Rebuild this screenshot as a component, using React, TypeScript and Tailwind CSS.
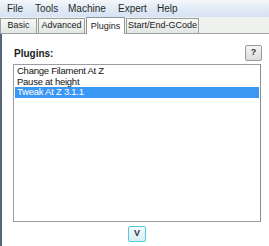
import React from "react";

const menus = [
    { label: "File", w: "w-[28px]" },
    { label: "Tools", w: "w-[33px]" },
    { label: "Machine", w: "w-[50px]" },
    { label: "Expert", w: "w-[39px]" },
    { label: "Help", w: "w-[30px]" },
];

const plugins = ["Change Filament At Z", "Pause at height", "Tweak At Z 3.1.1"];

function Tab({ label, w, active }: { label: string; w: string; active?: boolean }) {
    if (active) {
        return (
            <div className={`${w} h-[17px] -mb-px bg-white border border-b-0 border-[#8e9894] flex items-start pt-[2px] justify-center text-[#1a1a1a] whitespace-nowrap relative z-10`}>
                {label}
            </div>
        );
    }
    return (
        <div className={`${w} h-[15px] bg-gradient-to-b from-[#f7f8f7] to-[#e2e6e2] border border-b-0 border-[#9aa29e] flex items-center justify-center text-[#1a1a1a] whitespace-nowrap`}>
            {label}
        </div>
    );
}

export default function App() {
    return (
        <div
            className="w-[269px] h-[246px] bg-white overflow-hidden flex flex-col"
            style={{ fontFamily: '"Liberation Sans", Arial, sans-serif' }}
        >
            <div className="h-[17px] bg-gradient-to-b from-[#f5f7f9] via-[#e2eaf6] to-[#d6e2f5] flex items-center pl-[7px] text-[10px] text-[#1f2d1f]">
                {menus.map((m) => (
                    <span key={m.label} className={`${m.w} whitespace-nowrap`}>{m.label}</span>
                ))}
            </div>
            <div className="h-[17px] bg-[#eff1ee] border-b border-[#9aa29e] flex items-end gap-px text-[9px]">
                <Tab label="Basic" w="w-[37px]" />
                <Tab label="Advanced" w="w-[47px]" />
                <Tab label="Plugins" w="w-[39px]" active />
                <Tab label="Start/End-GCode" w="w-[73px]" />
            </div>
            <div className="flex-1 flex">
                <div className="w-[2px] bg-[#56647c]" />
                <div className="flex-1 flex flex-col pl-[11px] pr-[8px] pt-[11px]">
                    <div className="flex items-center justify-between h-[16px]">
                        <span className="text-[10px] font-bold text-[#1a1a1a] pl-px">Plugins:</span>
                        <div className="w-[17px] h-[16px] mr-[-1px] border border-[#9a9a9a] rounded-[2px] bg-gradient-to-b from-[#f6f6f6] to-[#dcdcdc] flex items-center justify-center text-[9px] font-bold text-[#333]">
                            ?
                        </div>
                    </div>
                    <div className="mt-[3px] h-[158px] border border-[#9c9ca4] border-r-[#8a8a98] bg-white pt-px px-px">
                        {plugins.map((p, i) => (
                            <div
                                key={p}
                                className={`h-[10.5px] leading-[10.5px] pl-[2px] text-[9.5px] tracking-[-0.25px] whitespace-nowrap ${i === 2 ? "bg-[#3a98f4] text-white" : "text-[#111]"}`}
                            >
                                {p}
                            </div>
                        ))}
                    </div>
                    <div className="flex justify-center mt-[4px]">
                        <div className="w-[18px] h-[16px] border border-[#52cbe0] rounded-[2px] bg-gradient-to-b from-[#f4fbfd] to-[#d8eef4] flex items-center justify-center text-[9px] font-bold text-[#334]">
                            V
                        </div>
                    </div>
                </div>
            </div>
        </div>
    );
}
